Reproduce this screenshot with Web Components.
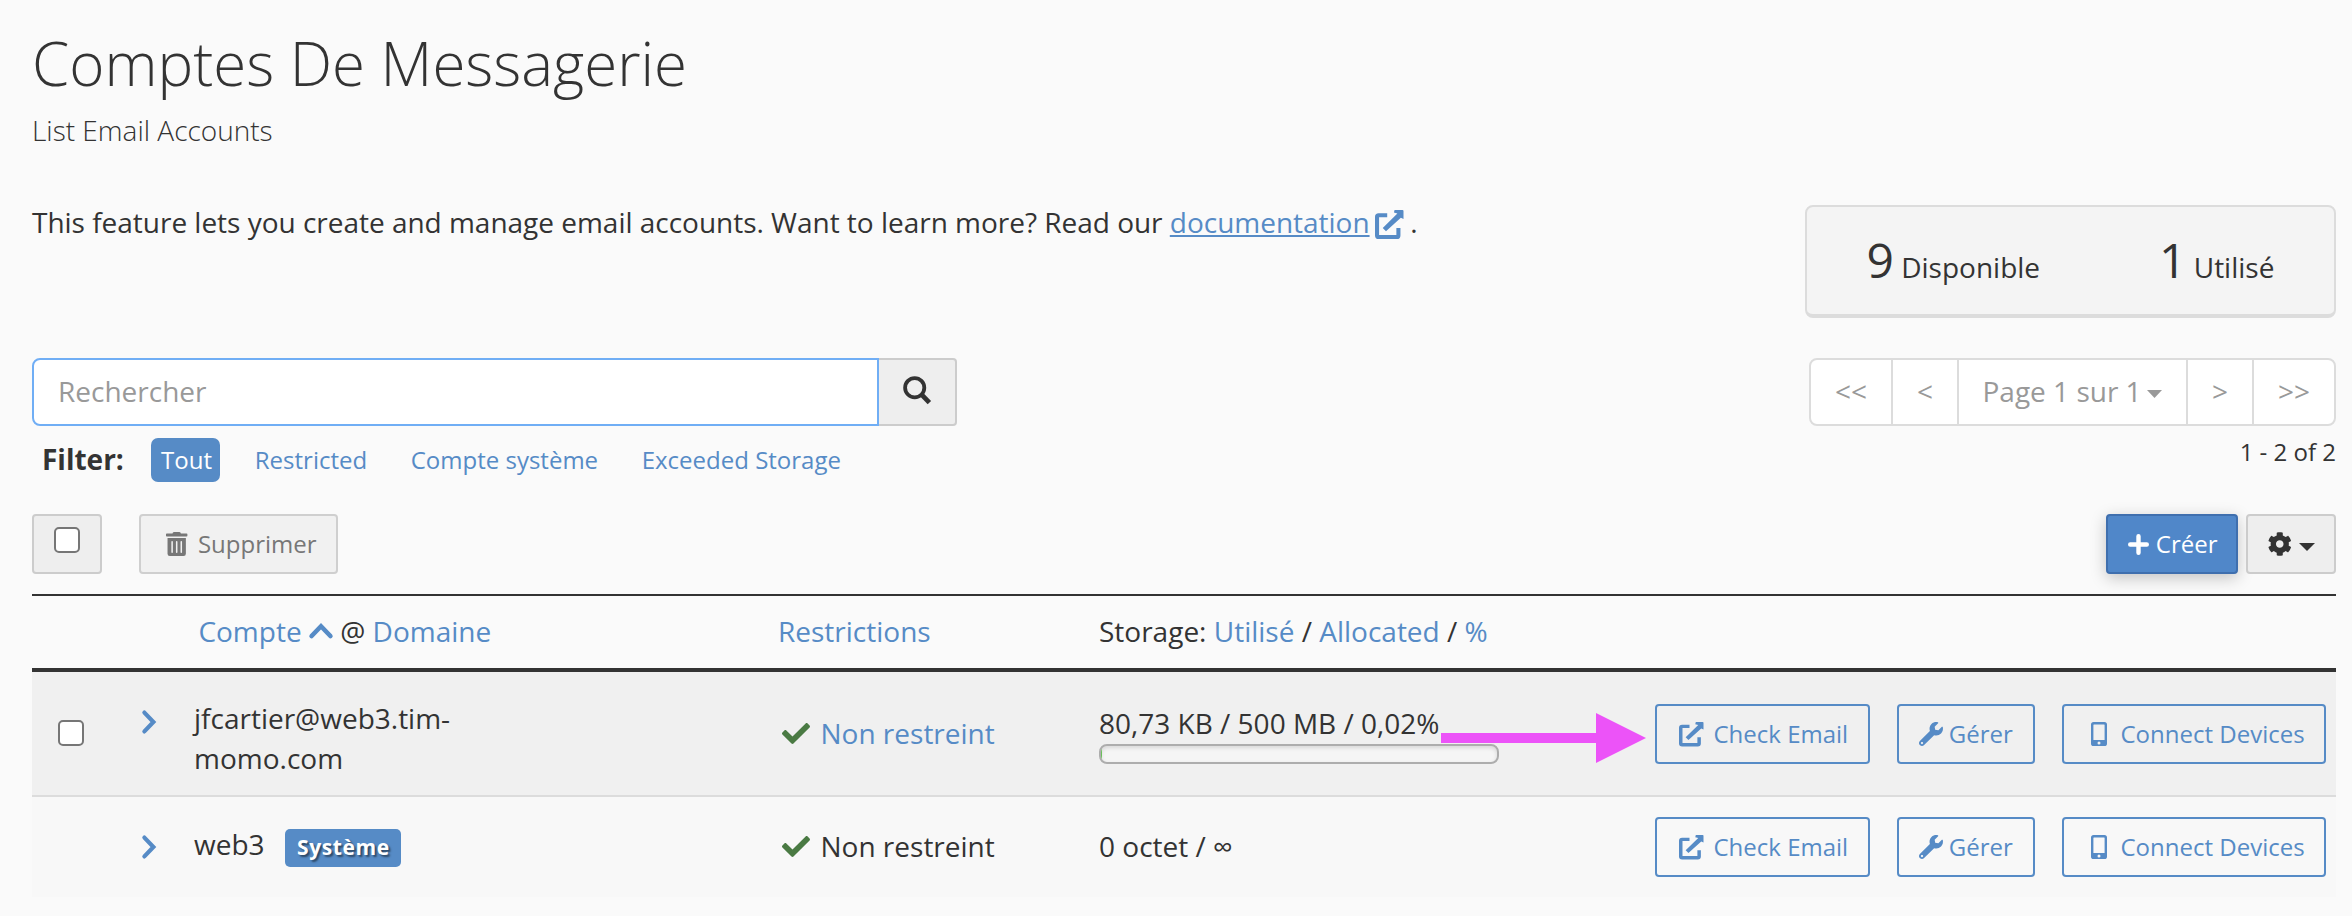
<!DOCTYPE html>
<html lang="fr">
<head>
<meta charset="utf-8">
<title>Comptes De Messagerie</title>
<style>
html,body{margin:0;padding:0}
body{background:#fafafa;color:#333;font:28px/40px "Open Sans","Noto Sans",sans-serif;--link:#568bc6;--dark:#333;overflow:hidden}
</style>
</head>
<body>
<mail-page></mail-page>
<script>
const define=(name,html,setup)=>customElements.define(name,class extends HTMLElement{
  constructor(){
    super();
    const root=this.attachShadow({mode:'open'});
    const t=document.createElement('template');
    t.innerHTML=html;
    root.append(t.content.cloneNode(true));
    if(setup)setup(this,root);
  }
});

const ICONS={
  external:['0 0 28 29','<path d="M12 5.2H3.6Q2 5.2 2 6.8V25.4Q2 27 3.6 27H21.4Q23 27 23 25.4V18" fill="none" stroke="currentColor" stroke-width="4"/><path d="M19.2 0H27Q28 0 28 1V9L25.4 7.8 10.8 21.2 7.6 18 22 3.6 18.6 2.6Z"/>'],
  wrench:['0 0 512 512','<path d="M507.73 109.1c-2.24-9.03-13.54-12.09-20.12-5.51l-74.36 74.36-67.88-11.31-11.31-67.88 74.36-74.36c6.62-6.62 3.43-17.9-5.66-20.16-47.38-11.74-99.55.91-136.58 37.93-39.64 39.64-50.55 97.1-34.05 147.2L18.74 402.76c-24.99 24.99-24.99 65.51 0 90.5 24.99 24.99 65.51 24.99 90.5 0l213.21-213.21c50.12 16.71 107.47 5.68 147.37-34.22 37.07-37.07 49.7-89.32 37.91-136.73zM64 472c-13.25 0-24-10.75-24-24 0-13.26 10.75-24 24-24s24 10.74 24 24c0 13.25-10.75 24-24 24z"/>'],
  mobile:['0 0 16 24','<path fill-rule="evenodd" d="M2.6 0H13.4Q16 0 16 2.6V21.4Q16 24 13.4 24H2.6Q0 24 0 21.4V2.6Q0 0 2.6 0ZM2.9 2.4Q2.4 2.4 2.4 2.9V18H13.6V2.9Q13.6 2.4 13.1 2.4ZM8 19.6A1.5 1.5 0 1 0 8 22.6 1.5 1.5 0 1 0 8 19.6Z"/>'],
  check:['0 65 512 382','<path d="M173.898 439.404l-166.4-166.4c-9.997-9.997-9.997-26.206 0-36.204l36.203-36.204c9.997-9.998 26.207-9.998 36.204 0L192 312.69 432.095 72.596c9.997-9.997 26.207-9.997 36.204 0l36.203 36.204c9.997 9.997 9.997 26.206 0 36.204l-294.4 294.401c-9.998 9.997-26.207 9.997-36.204-.001z"/>'],
  trash:['0 0 448 512','<path d="M32 464a48 48 0 0 0 48 48h288a48 48 0 0 0 48-48V128H32zm272-256a16 16 0 0 1 32 0v224a16 16 0 0 1-32 0zm-96 0a16 16 0 0 1 32 0v224a16 16 0 0 1-32 0zm-96 0a16 16 0 0 1 32 0v224a16 16 0 0 1-32 0zM432 32H312l-9.4-18.7A24 24 0 0 0 281.1 0H166.8a23.72 23.72 0 0 0-21.4 13.3L136 32H16A16 16 0 0 0 0 48v32a16 16 0 0 0 16 16h416a16 16 0 0 0 16-16V48a16 16 0 0 0-16-16z"/>'],
  cog:['8 4 496 504','<path d="M487.4 315.7l-42.6-24.6c4.3-23.2 4.3-47 0-70.2l42.6-24.6c4.9-2.8 7.1-8.6 5.5-14-11.1-35.6-30-67.8-54.7-94.6-3.8-4.1-10-5.1-14.8-2.3L380.8 110c-17.9-15.4-38.5-27.3-60.8-35.1V25.8c0-5.6-3.9-10.5-9.4-11.7-36.7-8.2-74.3-7.8-109.2 0-5.5 1.2-9.4 6.1-9.4 11.7V75c-22.2 7.9-42.8 19.8-60.8 35.1L88.7 85.5c-4.9-2.8-11-1.9-14.8 2.3-24.7 26.7-43.6 58.9-54.7 94.6-1.7 5.4.6 11.2 5.5 14L67.3 221c-4.3 23.2-4.3 47 0 70.2l-42.6 24.6c-4.9 2.8-7.1 8.6-5.5 14 11.1 35.6 30 67.8 54.7 94.6 3.8 4.1 10 5.1 14.8 2.3l42.6-24.6c17.9 15.4 38.5 27.3 60.8 35.1v49.2c0 5.6 3.9 10.5 9.4 11.7 36.7 8.2 74.3 7.8 109.2 0 5.5-1.2 9.4-6.1 9.4-11.7v-49.2c22.2-7.9 42.8-19.8 60.8-35.1l42.6 24.6c4.9 2.8 11 1.9 14.8-2.3 24.7-26.7 43.6-58.9 54.7-94.6 1.5-5.5-.7-11.3-5.6-14.1zM256 336c-44.1 0-80-35.9-80-80s35.9-80 80-80 80 35.9 80 80-35.9 80-80 80z"/>'],
  plus:['0 0 21 21','<path d="M10.5 2.2V18.8M2.2 10.5H18.8" fill="none" stroke="currentColor" stroke-width="4.4" stroke-linecap="round"/>'],
  search:['0 0 29 29','<circle cx="11.7" cy="11.7" r="9.6" fill="none" stroke="currentColor" stroke-width="3.8"/><path d="M18.4 18.4L26.4 26.6" fill="none" stroke="currentColor" stroke-width="4.8"/>'],
  right:['0 0 14 24','<path d="M2.4 2.6L11.4 12 2.4 21.4" fill="none" stroke="currentColor" stroke-width="4.2" stroke-linecap="round"/>'],
  up:['0 0 24 16','<path d="M2.6 13L12 3.2 21.4 13" fill="none" stroke="currentColor" stroke-width="4.6" stroke-linecap="round"/>'],
  caret:['0 0 16 8','<path d="M0 0H16L8 8Z"/>'],
  arrow:['0 0 205 50','<path d="M0 20H155V0L205 25 155 50V30H0Z"/>']
};

/* Glyph drawn at the size that its name, w and h attributes give */
customElements.define('ui-icon',class extends HTMLElement{
  connectedCallback(){
    if(this.shadowRoot)return;
    const [box,body]=ICONS[this.getAttribute('name')];
    const w=this.getAttribute('w'),h=this.getAttribute('h');
    this.attachShadow({mode:'open'}).innerHTML=
      `<style>:host{display:inline-block;flex:none;width:${w}px;height:${h}px;line-height:0}svg{display:block;overflow:visible}</style>
       <svg width="${w}" height="${h}" viewBox="${box}" preserveAspectRatio="none" fill="currentColor" aria-hidden="true">${body}</svg>`;
  }
});

define('ui-checkbox',`<style>:host{display:block;flex:none;box-sizing:border-box;width:26px;height:26px;border:2px solid #767676;border-radius:5px;background:#fff}</style>`);

define('ui-button',`<style>
:host{display:flex;align-items:flex-start;box-sizing:border-box;flex:none;height:60px;border:2px solid #ccc;border-radius:4px;background:#eee;font-size:24px;line-height:33px;padding:11px 0 0;white-space:nowrap}
:host([kind=outline]){background:transparent;border-color:var(--link);color:var(--link)}
:host([kind=primary]){background:#5087c9;border-color:#3f6fae;color:#fff;box-shadow:0 4px 16px rgba(0,0,0,.22)}
:host([kind=disabled]){background:#f1f1f1;border-color:#cfcfcf;color:#777}
</style><slot></slot>`);

define('page-title',`<style>
:host{display:block;padding-top:22px;font-weight:300}
h1{margin:0;font-size:60px;line-height:82px;font-weight:300}
p{margin:6px 0 0}
</style><h1><slot></slot></h1><p><slot name="sub"></slot></p>`);

define('account-stats',`<style>
:host{display:flex;box-sizing:border-box;width:531px;height:113px;border:2px solid #dcdcdc;border-bottom-width:4px;border-radius:8px;background:#f4f4f4;padding:20px 0 0 59.5px;line-height:65px;white-space:nowrap}
div{height:65px}.a{width:292.5px}b{font-size:48px;font-weight:400}
</style><div class="a"><b>9</b> Disponible</div><div><b>1</b> Utilisé</div>`);

define('page-intro',`<style>
:host{display:flex;justify-content:space-between;align-items:flex-start;margin-top:52px}
p{margin:0;white-space:nowrap;letter-spacing:-.017px}a{color:var(--link);text-decoration:underline;text-decoration-thickness:2px;text-underline-offset:2px}
ui-icon{color:var(--link);vertical-align:-6px;margin:-10px 0 0 5px}
account-stats{margin-top:3px}
</style><p>This feature lets you create and manage email accounts. Want to learn more? Read our <a>documentation</a><ui-icon name="external" w="28.5" h="29"></ui-icon> .</p><account-stats></account-stats>`);

define('search-box',`<style>
:host{display:flex;width:925px;height:68px}
.in{box-sizing:border-box;width:847px;border:2px solid #70aef5;border-radius:8px 0 0 8px;background:#fff;color:#999;padding:11px 0 0 24px}
.go{box-sizing:border-box;width:78px;border:2px solid #ccc;border-left:0;border-radius:0 4px 4px 0;background:#eee;padding:16px 0 0 24px;line-height:0}
</style><div class="in">Rechercher</div><div class="go"><ui-icon name="search" w="29" h="29"></ui-icon></div>`);

define('filter-bar',`<style>
:host{display:flex;align-items:flex-start;margin-top:12px;padding-left:10px;height:44px;white-space:nowrap}
b{width:109px;margin-top:1px}
a{box-sizing:border-box;height:44px;padding:5px 10px 0;margin-right:23.6px;border-radius:7px;font-size:24px;line-height:33px;color:var(--link)}
a.on{background:var(--link);color:#fff;width:69px;margin-right:24.8px}
</style><b>Filter:</b><a class="on">Tout</a><a>Restricted</a><a>Compte système</a><a>Exceeded Storage</a>`);

define('page-nav',`<style>
:host{display:block;width:527px}
nav{display:flex;box-sizing:border-box;height:68px;border:2px solid #dcdcdc;border-radius:8px;background:#fff;color:#999}
span{box-sizing:border-box;padding-top:11px;text-align:center;border-right:2px solid #dcdcdc;width:66px;white-space:nowrap}
.f{width:82px}.l{width:80px;border:0}.m{width:229px;display:flex;padding-left:23.5px}
.m ui-icon{margin:19px 0 0 5px}
p{margin:9px 0 0;font-size:24px;line-height:33px;text-align:right}
</style><nav><span class="f">&lt;&lt;</span><span>&lt;</span><span class="m">Page 1 sur 1<ui-icon name="caret" w="15" h="8"></ui-icon></span><span>&gt;</span><span class="l">&gt;&gt;</span></nav><p>1 - 2 of 2</p>`);

define('tool-bar',`<style>
:host{display:flex;margin-top:32px;height:60px}
.all{width:70px;padding-left:20px}
.del{width:199px;margin-left:37px;padding-left:24.5px}
.new{width:132px;margin-left:auto;padding-left:20px}
.cfg{width:90px;margin-left:8px;padding-left:20px;color:var(--dark)}
</style>
<ui-button class="all"><ui-checkbox></ui-checkbox></ui-button>
<ui-button class="del" kind="disabled"><ui-icon name="trash" w="21.4" h="24" style="margin:5px 11px 0 0"></ui-icon>Supprimer</ui-button>
<ui-button class="new" kind="primary"><ui-icon name="plus" w="21" h="21" style="margin:6.5px 6.8px 0 0"></ui-icon>Créer</ui-button>
<ui-button class="cfg"><ui-icon name="cog" w="23.5" h="24" style="margin:5px 7px 0 0"></ui-icon><ui-icon name="caret" w="16" h="8" style="margin-top:16px"></ui-icon></ui-button>`);

const COLS='display:grid;grid-template-columns:110px 52px 584px 321px 1fr;box-sizing:border-box;align-items:start;';

define('table-head',`<style>
:host{${COLS}margin-top:20px;height:78px;border-top:2px solid var(--dark);border-bottom:4px solid var(--dark);padding-top:15px;white-space:nowrap}
a{color:var(--link)}.c{grid-column:3;padding-left:4.4px}
ui-icon{color:var(--link);vertical-align:3px}
</style><div class="c"><a>Compte</a> <ui-icon name="up" w="24" h="16"></ui-icon> @ <a>Domaine</a></div><div><a>Restrictions</a></div><div>Storage: <a>Utilisé</a> / <a>Allocated</a> / <a>%</a></div>`);

define('account-actions',`<style>
:host{display:flex;justify-content:flex-end;gap:27px;padding-right:10px}
</style>
<ui-button kind="outline" style="width:215px;padding-left:22px"><ui-icon name="external" w="24.5" h="24.5" style="margin:5px 10px 0 0"></ui-icon>Check Email</ui-button>
<ui-button kind="outline" style="width:138px;padding-left:20px"><ui-icon name="wrench" w="24" h="24" style="margin:5px 5.8px 0 0"></ui-icon>Gérer</ui-button>
<ui-button kind="outline" style="width:264px;padding-left:27px"><ui-icon name="mobile" w="16" h="24" style="margin:5px 13.5px 0 0"></ui-icon>Connect Devices</ui-button>`);

/* Grid row whose cells are slotted; the custom properties set each cell's top padding */
define('account-row',`<style>
:host{${COLS}position:relative;height:var(--h);background:var(--bg);border-bottom:var(--line,0)}
.sel{padding:48px 0 0 26px}
.exp{padding-top:38px;color:var(--link);line-height:0}
.acc{padding-top:var(--acc);display:flex;align-items:flex-start}
.res{padding:var(--res) 0 0 4px;display:flex;align-items:flex-start}
.res ui-icon{color:#4a7a43;margin:9.5px 10.5px 0 0}
.last{display:flex;justify-content:space-between}
.sto{padding-top:var(--sto);white-space:nowrap}
account-actions{padding-top:var(--act)}
</style>
<div class="sel"><slot name="select"></slot></div>
<div class="exp"><ui-icon name="right" w="14" h="24"></ui-icon></div>
<div class="acc"><slot name="account"></slot></div>
<div class="res"><ui-icon name="check" w="28" h="21"></ui-icon><slot name="restriction"></slot></div>
<div class="last"><div class="sto"><slot name="storage"></slot></div><account-actions></account-actions></div>
<slot name="overlay"></slot>`);

define('quota-bar',`<style>
:host{display:block;box-sizing:border-box;width:400px;height:20px;margin-top:1px;border:2px solid #adadad;border-radius:8px;background:#f5f5f5;overflow:hidden;box-shadow:inset 0 2px 4px rgba(0,0,0,.12)}
i{display:block;width:1px;height:16px;background:#6abf5a}
</style><i></i>`);

define('system-badge',`<style>
:host{display:block;box-sizing:border-box;width:116px;height:38px;margin-top:5px;border-radius:5px;background:var(--link);color:#fff;font-size:21px;line-height:28px;font-weight:700;letter-spacing:.6px;padding:4px 0 0 12px;text-shadow:2px 2px 2px rgba(0,0,0,.5)}
</style><slot></slot>`);

define('pointer-arrow',`<style>
:host{display:block;position:absolute;left:1409px;top:41px;width:205px;height:50px;color:#ec53f8}
</style><ui-icon name="arrow" w="205" h="50"></ui-icon>`);

define('account-table',`<style>
:host{display:block}
.r1{--h:125px;--bg:#f0f0f0;--line:2px solid #dcdcdc;--acc:26px;--res:41px;--sto:31px;--act:32px}
.r2{--h:100px;--bg:#f8f8f8;--acc:27px;--res:29px;--sto:29px;--act:20px}
.name{width:91px}.lk{color:var(--link)}
</style>
<table-head></table-head>
<account-row class="r1">
  <ui-checkbox slot="select"></ui-checkbox>
  <div slot="account">jfcartier@web3.tim-<br>momo.com</div>
  <span slot="restriction" class="lk">Non restreint</span>
  <div slot="storage">80,73 KB / 500 MB / 0,02%<quota-bar></quota-bar></div>
  <pointer-arrow slot="overlay"></pointer-arrow>
</account-row>
<account-row class="r2">
  <div slot="account" class="name">web3</div><system-badge slot="account">Système</system-badge>
  <span slot="restriction">Non restreint</span>
  <div slot="storage">0 octet / ∞</div>
</account-row>`);

define('mail-page',`<style>
:host{display:block;box-sizing:border-box;width:2352px;height:916px;padding:0 16px 0 32px}
.bar{display:flex;justify-content:space-between;margin-top:40px;height:124px}
</style>
<page-title>Comptes De Messagerie<span slot="sub">List Email Accounts</span></page-title>
<page-intro></page-intro>
<div class="bar"><div><search-box></search-box><filter-bar></filter-bar></div><page-nav></page-nav></div>
<tool-bar></tool-bar>
<account-table></account-table>`);
</script>
</body>
</html>
